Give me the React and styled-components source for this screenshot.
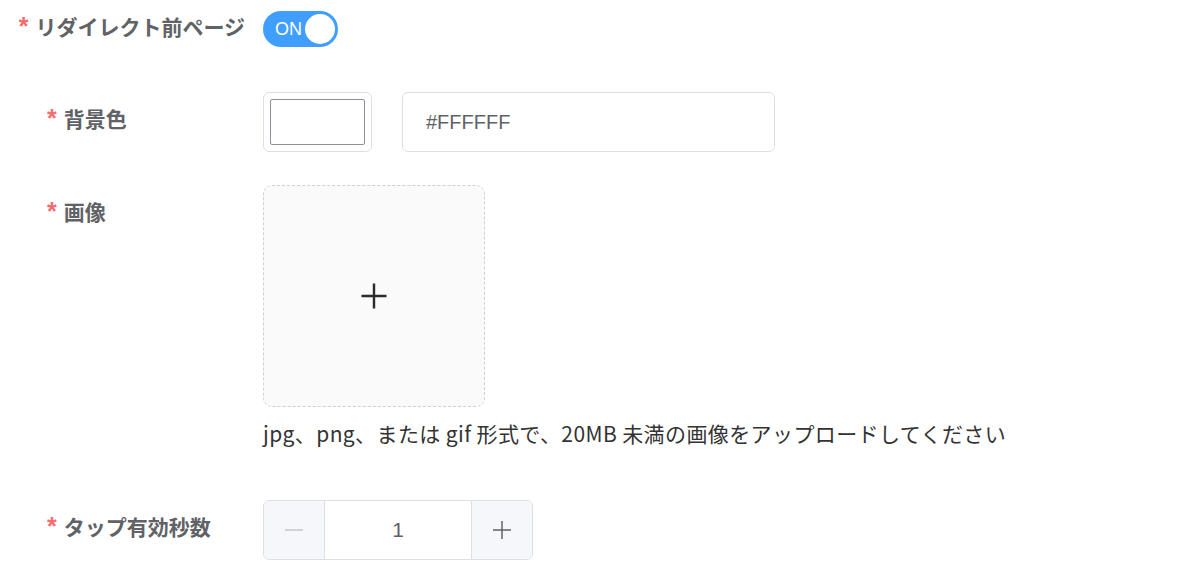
import React from "react";
import styled, { createGlobalStyle } from "styled-components";

const GlobalStyle = createGlobalStyle`
    body {
        margin: 0;
        background: #ffffff;
        font-family: "Noto Sans CJK JP", "Noto Sans", sans-serif;
    }
`;

function App() {
    return (
        <>
            <GlobalStyle />
            <Form>
                <Item height={58} mb={34}>
                    <Label align="right" lh={52}>
                        <Star>*</Star>リダイレクト前ページ
                    </Label>
                    <Content>
                        <Switch>
                            <SwitchText>ON</SwitchText>
                            <Knob />
                        </Switch>
                    </Content>
                </Item>

                <Item mb={33}>
                    <Label indent={47}>
                        <Star>*</Star>背景色
                    </Label>
                    <Content>
                        <ColorRow>
                            <ColorPicker>
                                <ColorSwatch />
                            </ColorPicker>
                            <TextInput defaultValue="#FFFFFF" />
                        </ColorRow>
                    </Content>
                </Item>

                <Item mb={33}>
                    <Label indent={47}>
                        <Star>*</Star>画像
                    </Label>
                    <Content>
                        <Upload>
                            <svg width="28" height="28" viewBox="0 0 28 28">
                                <path
                                    d="M14 1.5v25M1.5 14h25"
                                    stroke="#2b2b2b"
                                    strokeWidth="2.4"
                                    fill="none"
                                />
                            </svg>
                        </Upload>
                        <Hint>
                            jpg、png、または gif 形式で、20MB
                            未満の画像をアップロードしてください
                        </Hint>
                    </Content>
                </Item>

                <Item mb={0}>
                    <Label indent={47}>
                        <Star>*</Star>タップ有効秒数
                    </Label>
                    <Content>
                        <Stepper>
                            <StepButton side="left">
                                <svg width="18" height="18" viewBox="0 0 18 18">
                                    <path d="M0 9h18" stroke="#c0c4cc" strokeWidth="1.5" />
                                </svg>
                            </StepButton>
                            <StepValue>1</StepValue>
                            <StepButton side="right">
                                <svg width="18" height="18" viewBox="0 0 18 18">
                                    <path
                                        d="M0 9h18M9 0v18"
                                        stroke="#606266"
                                        strokeWidth="1.5"
                                    />
                                </svg>
                            </StepButton>
                        </Stepper>
                    </Content>
                </Item>
            </Form>
        </>
    );
}

export default App;

const Form = styled.div`
    width: 1203px;
    height: 581px;
    overflow: hidden;
`;
const Item = styled.div`
    display: flex;
    align-items: flex-start;
    min-height: ${(p) => p.height || 60}px;
    margin-bottom: ${(p) => p.mb}px;
`;
const Label = styled.div`
    width: 263px;
    flex-shrink: 0;
    box-sizing: border-box;
    padding-left: ${(p) => p.indent || 0}px;
    padding-right: 18px;
    text-align: ${(p) => p.align || "left"};
    line-height: ${(p) => p.lh || 53}px;
    font-size: 21px;
    font-weight: 700;
    color: #606266;
    white-space: nowrap;
`;
const Star = styled.span`
    display: inline-block;
    vertical-align: top;
    margin-top: 0;
    font-family: "Liberation Sans", Arial, sans-serif;
    font-size: 25px;
    font-weight: 700;
    color: #f56c6c;
    margin-right: 7px;
`;
const Content = styled.div`
    display: flex;
    flex-direction: column;
    align-items: flex-start;
`;
const Switch = styled.div`
    margin-top: 11px;
    position: relative;
    width: 75px;
    height: 36px;
    border-radius: 18px;
    background: #409eff;
    display: flex;
    align-items: center;
`;
const SwitchText = styled.span`
    margin-left: 12px;
    font-family: "Liberation Sans Narrow", "Liberation Sans", Arial, sans-serif;
    font-size: 18px;
    color: #ffffff;
`;
const Knob = styled.span`
    position: absolute;
    right: 3px;
    top: 3px;
    width: 30px;
    height: 30px;
    border-radius: 50%;
    background: #ffffff;
`;
const ColorRow = styled.div`
    display: flex;
    gap: 30px;
`;
const ColorPicker = styled.div`
    width: 109px;
    height: 60px;
    box-sizing: border-box;
    border: 1px solid #dcdfe6;
    border-radius: 6px;
    padding: 6px;
`;
const ColorSwatch = styled.div`
    width: 100%;
    height: 100%;
    box-sizing: border-box;
    border: 1px solid #8e9099;
    border-radius: 2px;
    background: #ffffff;
`;
const TextInput = styled.input`
    width: 373px;
    height: 60px;
    box-sizing: border-box;
    border: 1px solid #dcdfe6;
    border-radius: 6px;
    padding: 0 23px;
    font-family: "Liberation Sans", Arial, sans-serif;
    font-size: 20px;
    color: #606266;
    outline: none;
`;
const Upload = styled.div`
    width: 222px;
    height: 222px;
    box-sizing: border-box;
    border: 1px dashed #cfd1d6;
    border-radius: 9px;
    background: #fafafa;
    display: flex;
    align-items: center;
    justify-content: center;
`;
const Hint = styled.p`
    margin: 8px 0 16px;
    line-height: 36px;
    font-size: 21px;
    letter-spacing: 0.4px;
    color: #333333;
    white-space: nowrap;
`;
const Stepper = styled.div`
    display: flex;
    width: 270px;
    height: 60px;
    box-sizing: border-box;
    border: 1px solid #dcdfe6;
    border-radius: 6px;
    overflow: hidden;
`;
const StepButton = styled.div`
    width: 60px;
    flex-shrink: 0;
    background: #f5f7fa;
    display: flex;
    align-items: center;
    justify-content: center;
    ${(p) =>
        p.side === "left"
            ? "border-right: 1px solid #dcdfe6;"
            : "border-left: 1px solid #dcdfe6;"}
`;
const StepValue = styled.div`
    flex: 1;
    display: flex;
    align-items: center;
    justify-content: center;
    font-family: "Liberation Sans", Arial, sans-serif;
    font-size: 21px;
    color: #606266;
`;
